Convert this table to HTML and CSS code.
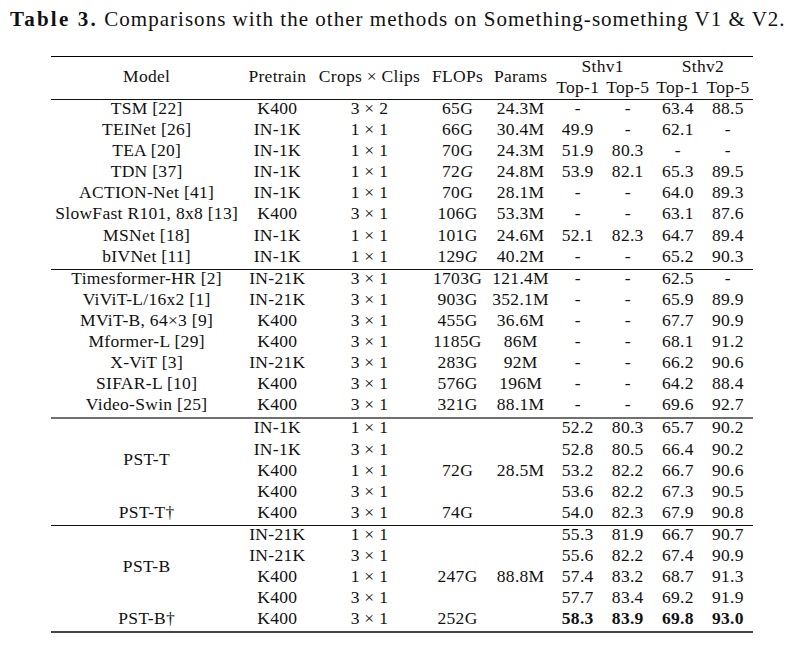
FILE: index.html
```html
<!DOCTYPE html>
<html>
<head>
<meta charset="utf-8">
<link rel="stylesheet" href="styles.css">
</head>
<body>
<div class="page">
  <p class="caption"><b>Table 3.</b> Comparisons with the other methods on Something-something V1 &amp; V2.</p>
  <table class="tbl">
    <colgroup>
      <col class="c-model"><col class="c-pre"><col class="c-cc"><col class="c-flops"><col class="c-params"><col class="c-top"><col class="c-top"><col class="c-top"><col class="c-top">
    </colgroup>
    <thead>
      <tr class="rule top"><td colspan="9"></td></tr>
      <tr class="h1">
        <th rowspan="2" class="mid">Model</th>
        <th rowspan="2" class="mid">Pretrain</th>
        <th rowspan="2" class="mid">Crops × Clips</th>
        <th rowspan="2" class="mid">FLOPs</th>
        <th rowspan="2" class="mid">Params</th>
        <th colspan="2">Sthv1</th>
        <th colspan="2">Sthv2</th>
      </tr>
      <tr class="h2">
        <th>Top-1</th><th>Top-5</th><th>Top-1</th><th>Top-5</th>
      </tr>
      <tr class="rule thin"><td colspan="9"></td></tr>
    </thead>
    <tbody>
      <tr><td>TSM [22]</td><td>K400</td><td>3 × 2</td><td>65G</td><td>24.3M</td><td>-</td><td>-</td><td>63.4</td><td>88.5</td></tr>
      <tr><td>TEINet [26]</td><td>IN-1K</td><td>1 × 1</td><td>66G</td><td>30.4M</td><td>49.9</td><td>-</td><td>62.1</td><td>-</td></tr>
      <tr><td>TEA [20]</td><td>IN-1K</td><td>1 × 1</td><td>70G</td><td>24.3M</td><td>51.9</td><td>80.3</td><td>-</td><td>-</td></tr>
      <tr><td>TDN [37]</td><td>IN-1K</td><td>1 × 1</td><td>72<i>G</i></td><td>24.8M</td><td>53.9</td><td>82.1</td><td>65.3</td><td>89.5</td></tr>
      <tr><td>ACTION-Net [41]</td><td>IN-1K</td><td>1 × 1</td><td>70G</td><td>28.1M</td><td>-</td><td>-</td><td>64.0</td><td>89.3</td></tr>
      <tr><td>SlowFast R101, 8x8 [13]</td><td>K400</td><td>3 × 1</td><td>106G</td><td>53.3M</td><td>-</td><td>-</td><td>63.1</td><td>87.6</td></tr>
      <tr><td>MSNet [18]</td><td>IN-1K</td><td>1 × 1</td><td>101G</td><td>24.6M</td><td>52.1</td><td>82.3</td><td>64.7</td><td>89.4</td></tr>
      <tr><td>bIVNet [11]</td><td>IN-1K</td><td>1 × 1</td><td>129<i>G</i></td><td>40.2M</td><td>-</td><td>-</td><td>65.2</td><td>90.3</td></tr>
    </tbody>
    <tbody>
      <tr class="rule thin"><td colspan="9"></td></tr>
      <tr><td>Timesformer-HR [2]</td><td>IN-21K</td><td>3 × 1</td><td>1703G</td><td>121.4M</td><td>-</td><td>-</td><td>62.5</td><td>-</td></tr>
      <tr><td>ViViT-L/16x2 [1]</td><td>IN-21K</td><td>3 × 1</td><td>903G</td><td>352.1M</td><td>-</td><td>-</td><td>65.9</td><td>89.9</td></tr>
      <tr><td>MViT-B, 64×3 [9]</td><td>K400</td><td>3 × 1</td><td>455G</td><td>36.6M</td><td>-</td><td>-</td><td>67.7</td><td>90.9</td></tr>
      <tr><td>Mformer-L [29]</td><td>K400</td><td>3 × 1</td><td>1185G</td><td>86M</td><td>-</td><td>-</td><td>68.1</td><td>91.2</td></tr>
      <tr><td>X-ViT [3]</td><td>IN-21K</td><td>3 × 1</td><td>283G</td><td>92M</td><td>-</td><td>-</td><td>66.2</td><td>90.6</td></tr>
      <tr><td>SIFAR-L [10]</td><td>K400</td><td>3 × 1</td><td>576G</td><td>196M</td><td>-</td><td>-</td><td>64.2</td><td>88.4</td></tr>
      <tr><td>Video-Swin [25]</td><td>K400</td><td>3 × 1</td><td>321G</td><td>88.1M</td><td>-</td><td>-</td><td>69.6</td><td>92.7</td></tr>
    </tbody>
    <tbody>
      <tr class="rule thick"><td colspan="9"></td></tr>
      <tr><td rowspan="4" class="mid">PST-T</td><td>IN-1K</td><td>1 × 1</td><td></td><td></td><td>52.2</td><td>80.3</td><td>65.7</td><td>90.2</td></tr>
      <tr><td>IN-1K</td><td>3 × 1</td><td></td><td></td><td>52.8</td><td>80.5</td><td>66.4</td><td>90.2</td></tr>
      <tr><td>K400</td><td>1 × 1</td><td>72G</td><td>28.5M</td><td>53.2</td><td>82.2</td><td>66.7</td><td>90.6</td></tr>
      <tr><td>K400</td><td>3 × 1</td><td></td><td></td><td>53.6</td><td>82.2</td><td>67.3</td><td>90.5</td></tr>
      <tr><td>PST-T†</td><td>K400</td><td>3 × 1</td><td>74G</td><td></td><td>54.0</td><td>82.3</td><td>67.9</td><td>90.8</td></tr>
    </tbody>
    <tbody>
      <tr class="rule thin"><td colspan="9"></td></tr>
      <tr><td rowspan="4" class="mid">PST-B</td><td>IN-21K</td><td>1 × 1</td><td></td><td></td><td>55.3</td><td>81.9</td><td>66.7</td><td>90.7</td></tr>
      <tr><td>IN-21K</td><td>3 × 1</td><td></td><td></td><td>55.6</td><td>82.2</td><td>67.4</td><td>90.9</td></tr>
      <tr><td>K400</td><td>1 × 1</td><td>247G</td><td>88.8M</td><td>57.4</td><td>83.2</td><td>68.7</td><td>91.3</td></tr>
      <tr><td>K400</td><td>3 × 1</td><td></td><td></td><td>57.7</td><td>83.4</td><td>69.2</td><td>91.9</td></tr>
      <tr><td>PST-B†</td><td>K400</td><td>3 × 1</td><td>252G</td><td></td><td class="best">58.3</td><td class="best">83.9</td><td class="best">69.8</td><td class="best">93.0</td></tr>
      <tr class="rule bottom"><td colspan="9"></td></tr>
    </tbody>
  </table>
</div>
</body>
</html>
```
FILE: styles.css
```css
html, body {
  margin: 0;
  padding: 0;
  background: #fff;
}
.page {
  padding: 8px 0 0 10px;
  color: #111;
  font-family: "Liberation Serif", "Times New Roman", serif;
}
.caption {
  margin: 0;
  font-size: 21px;
  line-height: 22px;
  letter-spacing: 1.02px;
  white-space: nowrap;
}
.caption b {
  font-weight: bold;
  letter-spacing: 2.2px;
}
.tbl {
  margin: 26px 0 0 41px;
  border-collapse: separate;
  border-spacing: 0;
  table-layout: fixed;
  width: 702px;
  font-size: 17.5px;
  letter-spacing: 0.3px;
}
.c-model { width: 191px; }
.c-pre { width: 70px; }
.c-cc { width: 114px; }
.c-flops { width: 62px; }
.c-params { width: 64px; }
.c-top { width: 50px; }
.tbl tr {
  height: 21.1px;
}
.tbl th, .tbl td {
  padding: 0 0 5.1px 0;
  text-align: center;
  vertical-align: top;
  white-space: nowrap;
  font-weight: normal;
  line-height: 16px;
}
.tbl tr.h1, .tbl tr.h2 {
  height: 21px;
}
.tbl tr.h1 th, .tbl tr.h2 th {
  padding: 1px 0 4px 0;
}
.tbl tr.h1 th.mid {
  padding: 0 0 5px 0;
}
.tbl .mid {
  vertical-align: middle;
}
.tbl td.best {
  font-weight: bold;
}
.tbl tr.rule {
  height: 1px;
}
.tbl tr.rule td {
  padding: 0;
  height: 1px;
  line-height: 0;
  font-size: 0;
  background: #111;
}
.tbl tr.rule.top td {
  background: #000;
}
.tbl tr.rule.thick, .tbl tr.rule.bottom {
  height: 2px;
}
.tbl tr.rule.thick td {
  height: 2px;
  background: #707070;
}
.tbl tr.rule.bottom td {
  height: 2px;
  background: #444;
}
```
